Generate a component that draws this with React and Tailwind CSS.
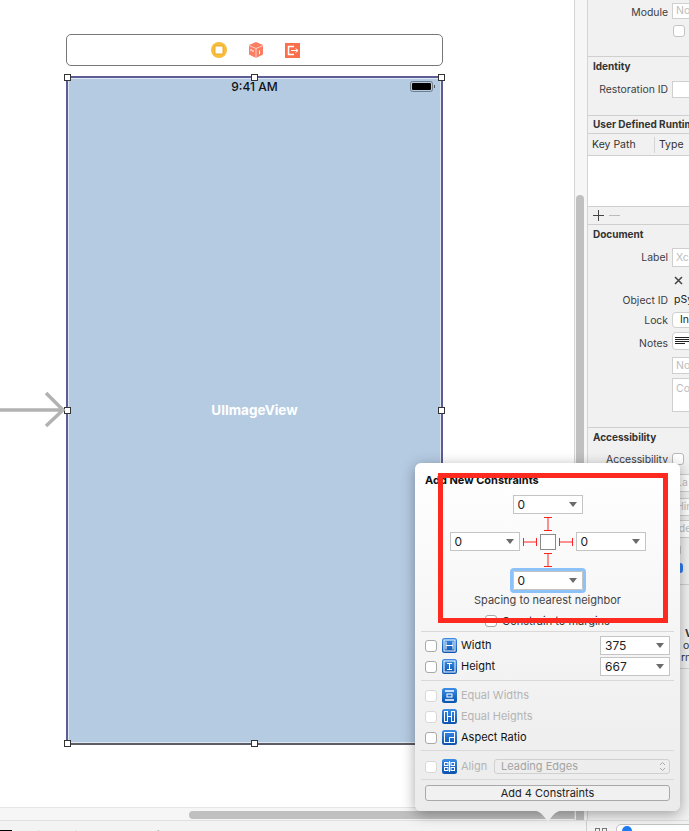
import React from "react";

const Caret = () => (
  <svg width="8" height="5" viewBox="0 0 8 5" className="shrink-0"><path d="M0 0H8L4 5Z" fill="#6b6b6b" /></svg>
);

function Drop({ v, cls = "" }) {
  return (
    <div className={"w-[70px] h-[19px] bg-white border border-[#c4c4c4] flex items-center justify-between pl-[4px] pr-[5px] text-[12px] text-[#222] " + cls}>
      <span>{v}</span>
      <Caret />
    </div>
  );
}

function Check({ dim }) {
  return <div className={"w-[12px] h-[12px] rounded-[3px] bg-white shrink-0 border " + (dim ? "border-[#d8d8d8] bg-[#f4f4f4]" : "border-[#a8a8a8]")} />;
}

function Blue({ children }) {
  return (
    <svg width="15" height="15" viewBox="0 0 15 15" className="shrink-0">
      <defs>
        <linearGradient id="bg" x1="0" y1="0" x2="0" y2="1">
          <stop offset="0" stopColor="#3b8de6" />
          <stop offset="1" stopColor="#0b53ad" />
        </linearGradient>
      </defs>
      <rect width="15" height="15" rx="2.5" fill="url(#bg)" />
      <g fill="none" stroke="#fff" strokeWidth="1">{children}</g>
    </svg>
  );
}

function Row({ icon, label, dim, right }) {
  return (
    <div className="h-[21px] px-[10px] flex items-center">
      <Check dim={dim} />
      <div className="ml-[5px]"><Blue>{icon}</Blue></div>
      <span className={"ml-[4px] text-[11px] " + (dim ? "text-[#b4b4b4]" : "text-[#111]")}>{label}</span>
      {right && <div className="ml-auto">{right}</div>}
    </div>
  );
}

const Divider = ({ cls }) => <div className={"mx-[6px] h-px bg-[#d9d9d9] " + cls} />;

function Beam({ vertical }) {
  return vertical ? (
    <svg width="14" height="14" viewBox="0 0 14 14" className="block"><path d="M3 .5H11M7 .5V13.5M3 13.5H11" stroke="#f22" fill="none" /></svg>
  ) : (
    <svg width="14" height="14" viewBox="0 0 14 14" className="block"><path d="M.5 3V11M.5 7H13.5M13.5 3V11" stroke="#f22" fill="none" /></svg>
  );
}

function Popover() {
  return (
    <div className="absolute left-[415px] top-[463px] w-[265px] h-[348px] rounded-[6px] bg-linear-to-b from-white to-[#ebebeb] shadow-[0_3px_14px_rgba(0,0,0,0.35)] pt-[10px] z-20">
      <div className="px-[10px] h-[14px] leading-[14px] text-[11px] font-bold text-[#111]">Add New Constraints</div>
      <div className="flex flex-col items-center mt-[8px]">
        <Drop v="0" />
        <div className="mt-[3px]"><Beam vertical /></div>
        <div className="mt-[1px] flex items-center gap-[3px]">
          <Drop v="0" />
          <Beam />
          <div className="w-[16px] h-[16px] bg-white border border-[#8a8a8a]" />
          <Beam />
          <Drop v="0" />
        </div>
        <div className="mt-[2px]"><Beam vertical /></div>
        <Drop v="0" cls="mt-[4px] outline-[3px] outline-[#8cc2f7] rounded-[1px]" />
        <div className="mt-[3px] h-[14px] leading-[14px] text-[11px] text-[#444]">Spacing to nearest neighbor</div>
        <div className="mt-[7px] h-[14px] flex items-center gap-[5px] text-[11px] text-[#333]">
          <Check />
          <span>Constrain to margins</span>
        </div>
      </div>
      <Divider cls="mt-[3px]" />
      <div className="mt-[3px]">
        <Row label="Width" right={<Drop v="375" />} icon={<><path d="M4 3.5V11.5M11 3.5V11.5M4 7.5H11" /><rect x="2" y="2" width="11" height="11" /></>} />
        <Row label="Height" right={<Drop v="667" />} icon={<><path d="M5 4.5H10M5 10.5H10M7.5 4.5V10.5" /><rect x="2" y="2" width="11" height="11" /></>} />
      </div>
      <Divider cls="mt-[3px]" />
      <div className="mt-[4px]">
        <Row dim label="Equal Widths" icon={<><path d="M3 3H12M3 12H12" strokeWidth="1.5" /><rect x="5" y="6" width="5" height="3" /></>} />
        <Row dim label="Equal Heights" icon={<><rect x="2.5" y="2.5" width="3" height="10" /><rect x="9.5" y="2.5" width="3" height="10" /><path d="M6 7.5H9" /></>} />
        <Row label="Aspect Ratio" icon={<><rect x="2.5" y="2.5" width="10" height="10" /><path d="M7.5 12.5V7.5H12.5" /></>} />
      </div>
      <Divider cls="mt-[2px]" />
      <div className="mt-[5px] h-[21px] px-[10px] flex items-center">
        <Check dim />
        <div className="ml-[5px]"><Blue><path d="M7.5 2V13" /><rect x="2.5" y="3.5" width="3.5" height="3" /><rect x="2.5" y="8.5" width="3.5" height="3" /><rect x="9" y="3.5" width="3.5" height="3" /><rect x="9" y="8.5" width="3.5" height="3" /></Blue></div>
        <span className="ml-[4px] text-[11px] text-[#b4b4b4]">Align</span>
        <div className="ml-auto w-[176px] h-[15px] rounded-[3px] border border-[#d0d0d0] flex items-center justify-between pl-[6px] pr-[3px] text-[11px] text-[#a4a4a4]">
          <span>Leading Edges</span>
          <svg width="7" height="11" viewBox="0 0 7 11"><path d="M1 4L3.5 1.5L6 4M1 7L3.5 9.5L6 7" fill="none" stroke="#aaa" /></svg>
        </div>
      </div>
      <Divider cls="mt-[2px]" />
      <div className="mt-[5px] mx-[10px] h-[16px] rounded-[3px] border border-[#a9a9a9] bg-[#f1f1f1] flex items-center justify-center text-[11px] text-[#222]">Add 4 Constraints</div>
      <svg width="42" height="14" viewBox="0 0 42 14" className="absolute left-[112px] top-[347px]">
        <path d="M0 0C12 0 14 2 21 12C28 2 30 0 42 0Z" fill="#ebebeb" />
      </svg>
      <div className="absolute left-[23px] top-[10px] w-[230px] h-[150px] border-[5px] border-[#ff2a1f]" />
    </div>
  );
}

const Handle = ({ cls }) => <div className={"absolute w-[7px] h-[7px] bg-white border border-[#333] " + cls} />;

function Scene() {
  return (
    <div className="relative mt-[10px] w-[377px] h-[669px] bg-[#b5cbe2] border-2 border-x-[#5e5c94] border-t-[#5e5c94] border-b-[#5c5c64] shadow-[inset_0_0_0_1px_rgba(255,255,255,0.55)]">
      <div className="flex items-center justify-center h-[16px] mt-px relative">
        <span className="text-[12px] font-medium text-[#111]">9:41 AM</span>
        <div className="absolute right-[6px] top-[2px] flex items-center">
          <div className="w-[23px] h-[11px] rounded-[2.5px] border border-[#6f7c8c] p-px"><div className="w-full h-full bg-black rounded-[1px]" /></div>
          <div className="w-px h-[3px] bg-[#555] ml-px" />
        </div>
      </div>
      <div className="absolute inset-0 flex items-center justify-center text-white text-[13.5px] font-bold">UIImageView</div>
      <Handle cls="-left-[4px] -top-[4px]" />
      <Handle cls="left-[183px] -top-[4px]" />
      <Handle cls="left-[370px] -top-[4px]" />
      <Handle cls="-left-[4px] top-[329px]" />
      <Handle cls="left-[370px] top-[329px]" />
      <Handle cls="-left-[4px] top-[662px]" />
      <Handle cls="left-[183px] top-[662px]" />
      <svg width="66" height="38" viewBox="0 0 66 38" className="absolute -left-[68px] top-[312px]">
        <path d="M0 20H62M46 3L63 20L46 36" fill="none" stroke="#b2b2b2" strokeWidth="3.5" />
      </svg>
    </div>
  );
}

function Dock() {
  return (
    <div className="w-[377px] h-[32px] rounded-[5px] border border-[#777] bg-white flex items-center justify-center gap-[21px] pl-[2px]">
      <svg width="16" height="16" viewBox="0 0 16 16">
        <circle cx="8" cy="8" r="8" fill="#f8bd3a" />
        <rect x="4" y="4" width="8" height="8" fill="#fff" stroke="#e9a92a" />
        <rect x="6" y="6" width="4" height="4" fill="#fff" />
      </svg>
      <svg width="16" height="16" viewBox="0 0 16 16">
        <path d="M8 0L15 3V12.5L8 16L1 12.5V3Z" fill="#fb7d62" />
        <path d="M1 3.5L8 6.5L15 3.5M8 6.5V16" stroke="#fdd2c6" fill="none" />
        <path d="M3 7V9M5 8V10M11.5 8.5V12" stroke="#fff" fill="none" />
      </svg>
      <svg width="15" height="15" viewBox="0 0 15 15">
        <rect width="15" height="15" fill="#fb6f4a" />
        <path d="M9 3.5H3.5V11.5H9" stroke="#fff" strokeWidth="1.5" fill="none" />
        <path d="M6 7.5H13M10.5 5.5L13 7.5L10.5 9.5" stroke="#fff" fill="none" />
      </svg>
    </div>
  );
}

function Lab({ t, h, m, children, cls = "pt-px" }) {
  return (
    <div className={"flex items-center " + m + " " + h}>
      <div className={"w-[80px] shrink-0 text-right text-[10.4px] text-[#3c3c44] whitespace-nowrap " + cls}>{t}</div>
      <div className="ml-[4px] flex-1 min-w-0 h-full flex items-center">{children}</div>
    </div>
  );
}

const Field = ({ t, cls = "items-center", color = "text-[#bdbdbd]" }) => (
  <div className={"w-[100px] h-full bg-white border border-[#cfcfcf] pl-[3px] text-[10.5px] flex shrink-0 " + color + " " + cls}>{t}</div>
);

const Title = ({ t, m }) => <div className={"h-[14px] leading-[14px] pl-[5px] text-[10px] font-bold text-[#333] whitespace-nowrap " + m}>{t}</div>;
const Rule = ({ m }) => <div className={"h-px bg-[#cfcfcf] " + m} />;

function Inspector() {
  return (
    <div className="w-[101px] h-full bg-[#f1f1f1] overflow-hidden pt-[3px] shrink-0">
      <Lab t="Module" h="h-[16px]" m="" cls="pt-[3px]"><Field t="No" /></Lab>
      <div className="mt-[6px] pl-[85px]"><div className="w-[12px] h-[12px] rounded-[3px] bg-white border border-[#c4c4c4]" /></div>
      <Rule m="mt-[19px]" />
      <Title t="Identity" m="mt-[2px]" />
      <Lab t="Restoration ID" h="h-[17px]" m="mt-[8px]"><Field t="" /></Lab>
      <Rule m="mt-[17px]" />
      <Title t="User Defined Runtime" m="mt-[1px]" />
      <Rule m="mt-[2px]" />
      <div className="h-[21px] flex items-center text-[10.5px] text-[#333] pl-[4px] whitespace-nowrap">
        <span className="w-[62px]">Key Path</span>
        <div className="w-px h-[16px] bg-[#d4d4d4] mr-[4px]" />
        <span>Type</span>
      </div>
      <Rule m="" />
      <div className="h-[50px] bg-white" />
      <Rule m="" />
      <div className="h-[17px] flex items-center pl-[5px] gap-[5px]">
        <svg width="11" height="11" viewBox="0 0 11 11"><path d="M0 5.5H11M5.5 0V11" stroke="#444" /></svg>
        <svg width="11" height="11" viewBox="0 0 11 11"><path d="M0 5.5H11" stroke="#bbb" /></svg>
      </div>
      <Rule m="" />
      <Title t="Document" m="mt-[2px]" />
      <Lab t="Label" h="h-[19px]" m="mt-[7px]"><Field t="Xc" /></Lab>
      <div className="mt-[6px] h-[14px] pl-[86px] flex items-center">
        <svg width="9" height="9" viewBox="0 0 9 9"><path d="M1 1L8 8M8 1L1 8" stroke="#444" strokeWidth="1.5" /></svg>
      </div>
      <Lab t="Object ID" h="h-[14px]" m="mt-[6px]"><span className="ml-[2px] text-[10.5px] text-[#222] whitespace-nowrap">pSy-9</span></Lab>
      <Lab t="Lock" h="h-[16px]" m="mt-[5px]"><Field t="In" cls="items-center rounded-[4px] pl-[7px]" color="text-[#222]" /></Lab>
      <Lab t="Notes" h="h-[18px]" m="mt-[4px]" cls="pt-[5px]">
        <div className="w-[100px] h-full shrink-0 bg-white border border-[#cfcfcf] rounded-[4px] pl-[2px] flex items-center">
          <svg width="14" height="8" viewBox="0 0 14 8"><path d="M0 .5H14M0 2.5H14M0 4.5H14M0 6.5H10" stroke="#222" /></svg>
        </div>
      </Lab>
      <div className="mt-[7px] h-[17px] pl-[84px]"><Field t="No" /></div>
      <div className="mt-[4px] h-[34px] pl-[84px]"><Field t="Co" cls="items-start pt-[2px]" /></div>
      <Rule m="mt-[15px]" />
      <Title t="Accessibility" m="mt-[2px]" />
      <Lab t="Accessibility" h="h-[14px]" m="mt-[8px]"><div className="w-[12px] h-[12px] rounded-[3px] bg-white border border-[#b8b8b8]" /></Lab>
      <div className="mt-[8px] h-[18px] pl-[84px]"><Field t="La" /></div>
      <div className="mt-[6px] h-[18px] pl-[84px]"><Field t="Hin" /></div>
      <div className="mt-[4px] h-[18px] pl-[84px]"><Field t="Ide" /></div>
      <div className="mt-[7px] h-[10px] pl-[85px]"><div className="w-[10px] h-[10px] rounded-[2px] bg-white border border-[#c4c4c4] -ml-[2px]" /></div>
      <div className="mt-[8px] h-[10px] pl-[84px]"><div className="w-[12px] h-[10px] rounded-[3px] bg-[#2f7ff0] -ml-px" /></div>
      <Rule m="mt-[11px]" />
      <div className="mt-[41px] h-[14px] leading-[14px] pl-[97px] text-[10px] font-bold text-[#333] whitespace-nowrap">V</div>
      <div className="h-[12px] leading-[12px] pl-[95px] text-[10.5px] text-[#333] whitespace-nowrap">o</div>
      <div className="h-[12px] leading-[12px] pl-[93px] text-[10.5px] text-[#333] whitespace-nowrap">rn</div>
      <Rule m="mt-[4px]" />
    </div>
  );
}

export default function App() {
  return (
    <div className="relative w-[689px] h-[831px] overflow-hidden bg-white flex flex-col font-['Inter','Liberation_Sans',sans-serif]">
      <div className="flex h-[820px]">
        <div className="w-[574px] shrink-0 flex flex-col">
          <div className="h-[807px] pl-[66px] pt-[34px] bg-white">
            <Dock />
            <Scene />
          </div>
          <div className="h-[13px] bg-[#f6f6f6] border-t border-[#e6e6e6] pl-[189px] pt-[3px]">
            <div className="h-[8px] bg-[#c0c0c0] rounded-l-[4px]" />
          </div>
        </div>
        <div className="w-[14px] shrink-0 bg-[#f6f6f6] border-x border-x-[#d4d4d4] pl-[1px] pt-[195px] pr-[2px]">
          <div className="w-[8px] h-[625px] bg-[#c0c0c0] rounded-t-[4px]" />
        </div>
        <Inspector />
      </div>
      <div className="h-[11px] flex bg-[#f3f3f3] border-t border-[#e0e0e0] overflow-hidden text-[10.5px] text-[#333] whitespace-nowrap">
        <div className="w-[587px] shrink-0 flex pt-[7px] border-r border-[#cfcfcf]">
          <div className="w-[12px] h-[1px] bg-black mt-[2px]" />
          <span className="ml-[18px]">View as: iPhone 8 (wC hR)</span>
          <span className="ml-[95px] text-[#888]">100%</span>
        </div>
        <div className="flex-1 relative">
          <div className="absolute left-[8px] top-[7px] flex gap-[2px]"><div className="w-[5px] h-[4px] border border-[#777]" /><div className="w-[5px] h-[4px] border border-[#777]" /></div>
          <div className="absolute left-[29px] top-[3px] w-[80px] h-[16px] rounded-[5px] bg-white border border-[#c4c4c4]">
            <div className="absolute left-[5px] top-[1px] w-[10px] h-[10px] rounded-full bg-[#1c7cf0]" />
          </div>
        </div>
      </div>
      <Popover />
    </div>
  );
}
